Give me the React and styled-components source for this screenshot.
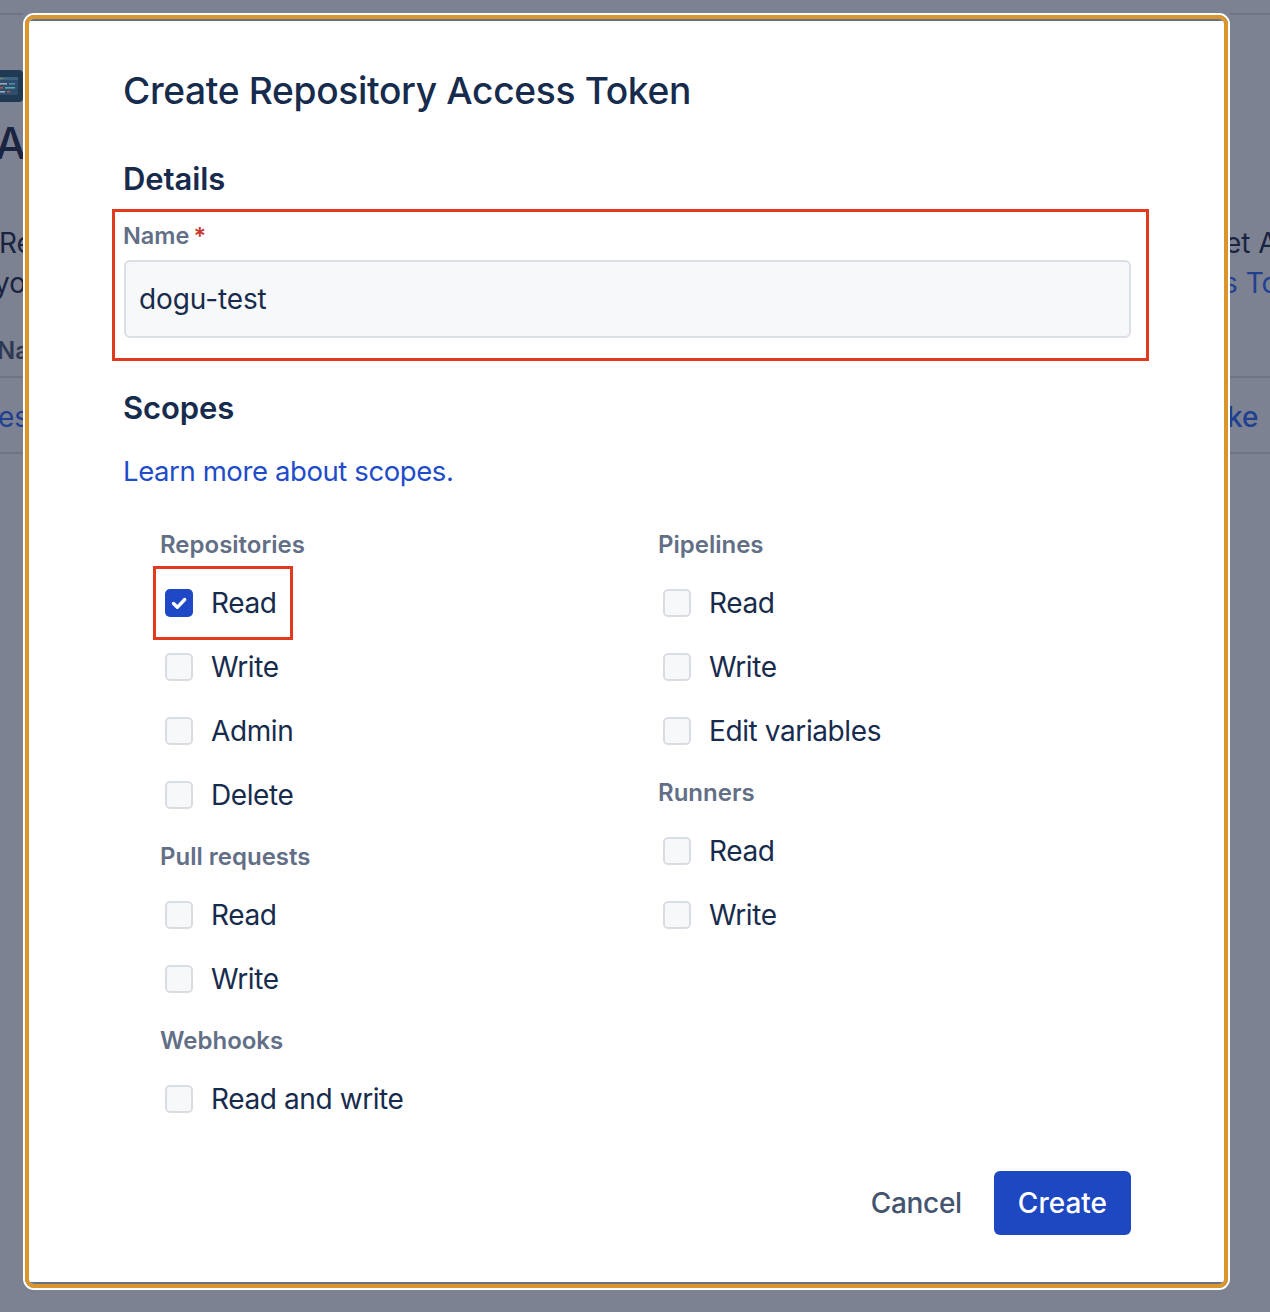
import React from "react";
import styled, { createGlobalStyle } from "styled-components";

const Global = createGlobalStyle`
  html, body { margin: 0; padding: 0; background: #7d8293; }
  body { font-family: Inter, "Noto Sans", "Liberation Sans", sans-serif; -webkit-font-smoothing: antialiased; }
  * { box-sizing: border-box; }
`;

const Page = styled.div`
  display: grid;
  grid-template-columns: 23px 1207px 40px;
  height: 1312px;
  background: #7d8293;
  overflow: hidden;
`;

/* ---------- dimmed page behind the modal ---------- */
const Strip = styled.div`
  overflow: hidden;
  display: flex;
  flex-direction: column;
  align-items: flex-start;
  padding-top: 13px;
  white-space: nowrap;
`;

const BgRule = styled.div`
  align-self: stretch;
  height: 2px;
  background: #6f7485;
  margin-top: ${(p) => p.$mt || 0}px;
`;

const BgText = styled.div`
  margin-top: ${(p) => p.$mt || 0}px;
  margin-left: ${(p) => p.$ml || 0}px;
  height: ${(p) => p.$lh}px;
  line-height: ${(p) => p.$lh}px;
  font-size: ${(p) => p.$size}px;
  font-weight: ${(p) => p.$weight || 400};
  color: ${(p) => p.$color || "#1a2440"};
`;

const BgIcon = styled.div`
  margin-top: 55px;
  margin-left: -10px;
  width: 33px;
  height: 32px;
  border-radius: 4px;
  background: #1f3a52;
  display: flex;
  align-items: center;
  justify-content: center;
`;

/* ---------- modal ---------- */
const Frame = styled.div`
  margin-top: 13px;
  align-self: start;
  border: 2px solid #ffffff;
  border-radius: 11px;
`;

const Ring = styled.div`
  border: 4px solid #d9962d;
  border-radius: 9px;
  overflow: hidden;
`;

const Dialog = styled.div`
  background: #ffffff;
  border-top: 2px solid #687083;
  border-bottom: 2px solid #687083;
  padding: 46px 93px 47px 95px;
  color: #172b4d;
`;

const Title = styled.h1`
  margin: 0 0 0 -1px;
  font-size: 37.2px;
  line-height: 48px;
  font-weight: 500;
  letter-spacing: -0.35px;
  color: #172b4d;
`;

const Heading = styled.h2`
  margin: ${(p) => p.$mt}px 0 0 -1px;
  font-size: 31px;
  line-height: 36px;
  font-weight: 600;
  letter-spacing: -0.1px;
  color: #172b4d;
`;

const Highlight = styled.div`
  margin: 12px -18px 0 -12px;
  border: 3px solid #e2391f;
  padding: 10px 15px 20px 9px;
`;

const FieldLabel = styled.label`
  display: block;
  margin-left: -1px;
  font-size: 23.5px;
  line-height: 28px;
  font-weight: 600;
  color: #626f86;
`;

const Required = styled.span`
  color: #c9372c;
  margin-left: 4px;
`;

const TextInput = styled.input`
  display: block;
  margin-top: 10px;
  width: 100%;
  height: 78px;
  border: 2px solid #dcdfe4;
  border-radius: 6px;
  background: #f7f8f9;
  padding: 0 13px;
  font-family: inherit;
  font-size: 28px;
  letter-spacing: -0.1px;
  color: #172b4d;
  outline: none;
`;

const LearnLink = styled.a`
  display: block;
  margin-top: 27px;
  margin-left: -1px;
  font-size: 27.5px;
  line-height: 36px;
  letter-spacing: -0.4px;
  color: #1f4cc9;
  text-decoration: none;
`;

const ScopeGrid = styled.div`
  margin-top: 26px;
  display: grid;
  grid-template-columns: 498px 1fr;
  padding-left: 36px;
`;

const Column = styled.div`
  display: flex;
  flex-direction: column;
  align-items: flex-start;
`;

const GroupLabel = styled.div`
  margin: 16px 0 12px;
  font-size: 24px;
  line-height: 28px;
  font-weight: 600;
  color: #626f86;
`;

const Item = styled.label`
  position: relative;
  display: flex;
  align-items: center;
  gap: 18px;
  height: 64px;
  padding-left: 5px;
  font-size: 28px;
  color: #172b4d;
  letter-spacing: -0.4px;

  ${(p) =>
    p.$highlight &&
    `
    &::after {
      content: "";
      position: absolute;
      left: -7px;
      right: -17px;
      top: -5px;
      bottom: -5px;
      border: 3px solid #e2391f;
      pointer-events: none;
    }
  `}
`;

const Box = styled.span`
  width: 28px;
  height: 28px;
  border-radius: 5px;
  flex: none;
  display: flex;
  align-items: center;
  justify-content: center;
  background: ${(p) => (p.$checked ? "#1e48c5" : "#f7f8f9")};
  border: ${(p) => (p.$checked ? "none" : "2px solid #d9dce2")};
`;

const Footer = styled.div`
  margin-top: 40px;
  display: flex;
  justify-content: flex-end;
  align-items: center;
`;

const Button = styled.button`
  height: 64px;
  border: none;
  border-radius: 6px;
  font-family: inherit;
  font-size: 28px;
  font-weight: 500;
  cursor: pointer;
  padding: 0 ${(p) => (p.$primary ? 24 : 15)}px;
  margin-left: ${(p) => (p.$primary ? 17 : 0)}px;
  letter-spacing: ${(p) => (p.$primary ? 0 : -0.3)}px;
  background: ${(p) => (p.$primary ? "#1e47c2" : "transparent")};
  color: ${(p) => (p.$primary ? "#ffffff" : "#44546f")};
`;

function Check({ checked, label, highlight }) {
  return (
    <Item $highlight={highlight}>
      <Box $checked={checked}>
        {checked && (
          <svg width="28" height="28" viewBox="0 0 28 28">
            <path d="M8.5 14.5l3.8 3.8 7.4-7.8" fill="none" stroke="#fff" strokeWidth="3.4" strokeLinecap="round" strokeLinejoin="round" />
          </svg>
        )}
      </Box>
      {label}
    </Item>
  );
}

function Group({ title, items }) {
  return (
    <>
      <GroupLabel>{title}</GroupLabel>
      {items.map((it, i) => (
        <Check key={i} {...it} />
      ))}
    </>
  );
}

export default function App() {
  return (
    <>
      <Global />
      <Page>
        <Strip>
          <BgRule />
          <BgIcon>
            <svg width="24" height="20" viewBox="0 0 24 20">
              <rect x="1" y="1" width="22" height="18" rx="1.5" fill="#2e4e6b" />
              <rect x="1" y="1" width="22" height="3" fill="#3f6280" />
              <circle cx="3.5" cy="2.5" r="0.8" fill="#b4524c" />
              <circle cx="6" cy="2.5" r="0.8" fill="#b59a4a" />
              <circle cx="8.5" cy="2.5" r="0.8" fill="#4f9a6a" />
              <rect x="3" y="7" width="9" height="1.6" fill="#9aa8b8" />
              <rect x="14" y="7" width="6" height="1.6" fill="#4e8bb0" />
              <rect x="3" y="11" width="5" height="1.6" fill="#b4524c" />
              <rect x="10" y="11" width="10" height="1.6" fill="#5aa3a8" />
              <rect x="3" y="15" width="7" height="1.6" fill="#9aa8b8" />
              <rect x="12" y="15" width="3" height="1.6" fill="#b4524c" />
            </svg>
          </BgIcon>
          <BgText $mt={17} $lh={48} $size={44} $weight={500} $ml={-5}>Ac</BgText>
          <BgText $mt={56} $lh={40} $size={28} $ml={-1}>Re</BgText>
          <BgText $lh={40} $size={28} $ml={-6}>you</BgText>
          <BgText $mt={32} $lh={32} $size={24} $weight={600} $color="#2f3a52" $ml={-3}>Na</BgText>
          <BgRule $mt={9} />
          <BgText $mt={19} $lh={40} $size={28} $color="#21408f" $ml={-2}>es</BgText>
          <BgRule $mt={15} />
        </Strip>

        <Frame>
          <Ring>
            <Dialog>
              <Title>Create Repository Access Token</Title>
              <Heading $mt={46}>Details</Heading>
              <Highlight>
                <FieldLabel>
                  Name<Required>*</Required>
                </FieldLabel>
                <TextInput readOnly value="dogu-test" />
              </Highlight>
              <Heading $mt={29}>Scopes</Heading>
              <LearnLink href="#">Learn more about scopes.</LearnLink>
              <ScopeGrid>
                <Column>
                  <Group
                    title="Repositories"
                    items={[
                      { label: "Read", checked: true, highlight: true },
                      { label: "Write" },
                      { label: "Admin" },
                      { label: "Delete" },
                    ]}
                  />
                  <Group title="Pull requests" items={[{ label: "Read" }, { label: "Write" }]} />
                  <Group title="Webhooks" items={[{ label: "Read and write" }]} />
                </Column>
                <Column>
                  <Group
                    title="Pipelines"
                    items={[{ label: "Read" }, { label: "Write" }, { label: "Edit variables" }]}
                  />
                  <Group title="Runners" items={[{ label: "Read" }, { label: "Write" }]} />
                </Column>
              </ScopeGrid>
              <Footer>
                <Button>Cancel</Button>
                <Button $primary>Create</Button>
              </Footer>
            </Dialog>
          </Ring>
        </Frame>

        <Strip>
          <BgRule />
          <BgText $mt={208} $lh={40} $size={28} $ml={-5}>et Ac</BgText>
          <BgText $lh={40} $size={28} $color="#21408f" $ml={-7}>s To</BgText>
          <BgText $mt={32} $lh={32} $size={24}>&nbsp;</BgText>
          <BgRule $mt={9} />
          <BgText $mt={19} $lh={40} $size={28} $weight={500} $color="#21408f" $ml={-3}>ke</BgText>
          <BgRule $mt={15} />
        </Strip>
      </Page>
    </>
  );
}
